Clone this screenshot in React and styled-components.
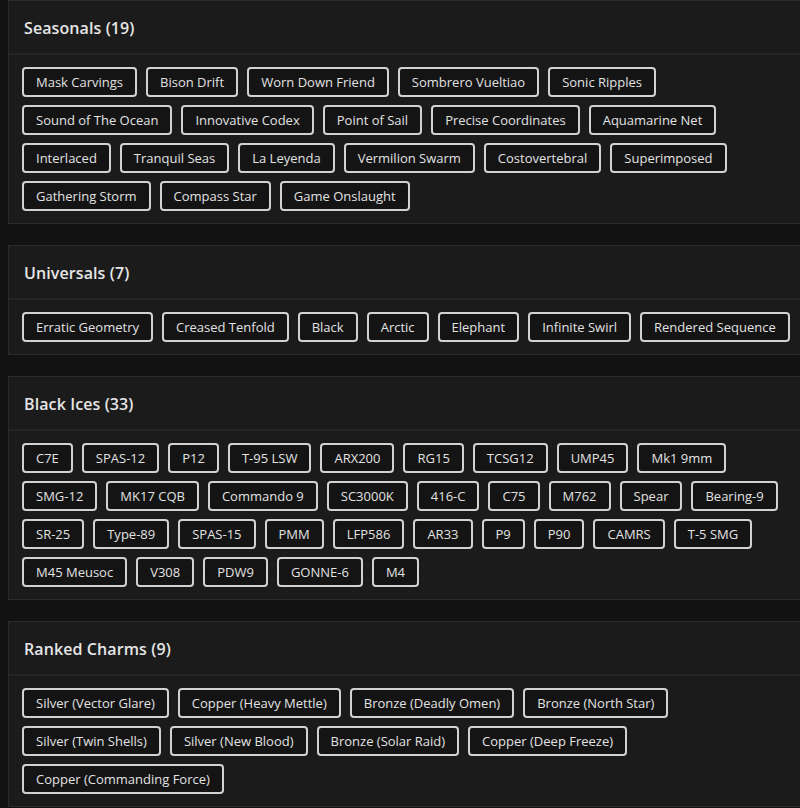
import React from 'react'
import styled, { createGlobalStyle } from 'styled-components'

const GlobalStyle = createGlobalStyle`
  html, body {
    margin: 0;
    padding: 0;
    background: #121212;
    overflow-x: hidden;
  }
  body {
    font-family: 'Open Sans', 'Liberation Sans', sans-serif;
    color: #e4e4e4;
  }
`

const Page = styled.div`
  padding: 0 0 0 8px;
  display: flex;
  flex-direction: column;
  gap: 21px;
  width: 806px;
`

const Panel = styled.section`
  background: #1b1b1b;
  border: 1px solid #2b2b2b;
`

const PanelHeader = styled.h3`
  margin: 0;
  height: 51px;
  display: flex;
  align-items: center;
  padding: 1px 15px 0;
  font-size: 16px;
  font-weight: 600;
  color: #e6e6e6;
  border-bottom: 2px solid #252525;
  letter-spacing: 0.1px;
`

const PanelBody = styled.div`
  padding: 12px 13px 12px;
  display: flex;
  flex-direction: column;
  gap: 8px;
`

const ChipRow = styled.div`
  display: flex;
  gap: 9px;
`

const Chip = styled.span`
  display: inline-block;
  box-sizing: border-box;
  height: 30px;
  padding: 5px 12px;
  line-height: 16px;
  font-size: 13px;
  font-weight: 500;
  color: #e2e2e2;
  background: #141414;
  border: 2px solid #d2d2d2;
  border-radius: 4px;
  white-space: nowrap;
`

const sections = [
  {
    title: 'Seasonals (19)',
    rows: [
      ['Mask Carvings', 'Bison Drift', 'Worn Down Friend', 'Sombrero Vueltiao', 'Sonic Ripples'],
      ['Sound of The Ocean', 'Innovative Codex', 'Point of Sail', 'Precise Coordinates', 'Aquamarine Net'],
      ['Interlaced', 'Tranquil Seas', 'La Leyenda', 'Vermilion Swarm', 'Costovertebral', 'Superimposed'],
      ['Gathering Storm', 'Compass Star', 'Game Onslaught'],
    ],
  },
  {
    title: 'Universals (7)',
    rows: [
      ['Erratic Geometry', 'Creased Tenfold', 'Black', 'Arctic', 'Elephant', 'Infinite Swirl', 'Rendered Sequence'],
    ],
  },
  {
    title: 'Black Ices (33)',
    rows: [
      ['C7E', 'SPAS-12', 'P12', 'T-95 LSW', 'ARX200', 'RG15', 'TCSG12', 'UMP45', 'Mk1 9mm'],
      ['SMG-12', 'MK17 CQB', 'Commando 9', 'SC3000K', '416-C', 'C75', 'M762', 'Spear', 'Bearing-9'],
      ['SR-25', 'Type-89', 'SPAS-15', 'PMM', 'LFP586', 'AR33', 'P9', 'P90', 'CAMRS', 'T-5 SMG'],
      ['M45 Meusoc', 'V308', 'PDW9', 'GONNE-6', 'M4'],
    ],
  },
  {
    title: 'Ranked Charms (9)',
    rows: [
      ['Silver (Vector Glare)', 'Copper (Heavy Mettle)', 'Bronze (Deadly Omen)', 'Bronze (North Star)'],
      ['Silver (Twin Shells)', 'Silver (New Blood)', 'Bronze (Solar Raid)', 'Copper (Deep Freeze)'],
      ['Copper (Commanding Force)'],
    ],
  },
]

export default function App() {
  return (
    <>
      <GlobalStyle />
      <Page>
        {sections.map((s) => (
          <Panel key={s.title}>
            <PanelHeader>{s.title}</PanelHeader>
            <PanelBody>
              {s.rows.map((row, i) => (
                <ChipRow key={i}>
                  {row.map((name) => (
                    <Chip key={name}>{name}</Chip>
                  ))}
                </ChipRow>
              ))}
            </PanelBody>
          </Panel>
        ))}
      </Page>
    </>
  )
}
